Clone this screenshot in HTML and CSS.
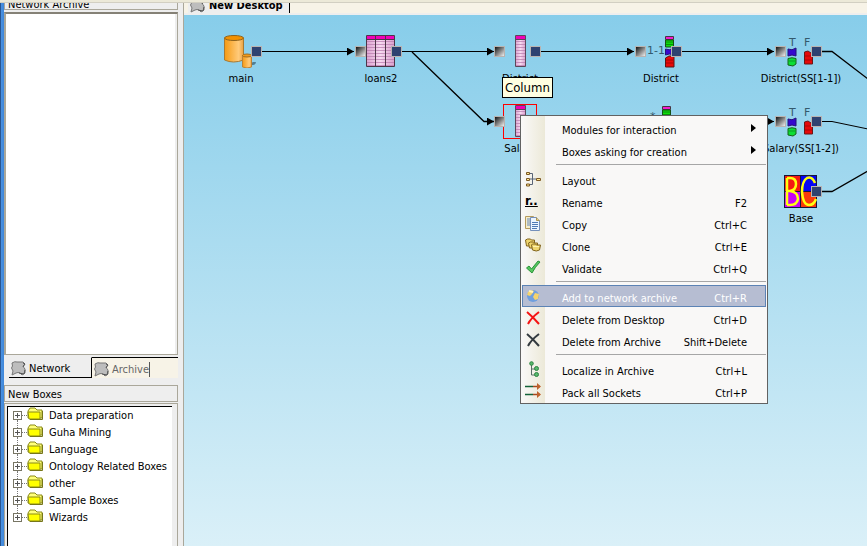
FILE: index.html
```
<!DOCTYPE html>
<html lang="en">
<head>
<meta charset="utf-8">
<title>New Desktop</title>
<link rel="stylesheet" href="styles.css">
</head>
<body>
<svg class="defs" aria-hidden="true">
  <defs>
    <linearGradient id="gold"><stop offset="0" stop-color="#f59a12"/><stop offset=".75" stop-color="#ffcb7c"/><stop offset="1" stop-color="#e9a040"/></linearGradient>
    <linearGradient id="pink"><stop offset="0" stop-color="#dca4d0"/><stop offset=".5" stop-color="#f6d9f0"/><stop offset="1" stop-color="#d9a0cc"/></linearGradient>
    <pattern id="lines" width="4" height="3" patternUnits="userSpaceOnUse"><path d="M0 1.5h4" stroke="#b878ac" stroke-width=".7"/></pattern>
    <marker id="arrow" markerWidth="8" markerHeight="8" refX="7" refY="4" orient="auto" markerUnits="userSpaceOnUse"><path d="M0 0L7 4L0 8z"/></marker>
    <symbol id="puzzle" viewBox="0 0 15 15"><path d="M1 2Q4 0 6 1L12 1L14 3L12 5Q13 7 14 8L14 12L11 14L9 12Q7 11 5 12L1 14L2 10L0.500 7L1.500 5Z" fill="#bdbdbd" stroke="#777"/><path d="M12 2L14 3L12 6M14 9L13 13L8 12" fill="none" stroke="#555"/></symbol>
    <symbol id="folder" viewBox="0 0 17 14"><path d="M1 4L3 1H8L10 3H15V11H1Z" fill="#ffff7a" stroke="#8a8a18"/><path d="M1 5H13V12H2Z" fill="#ff0" stroke="#8a8a18"/><path d="M15.500 4V12.500H3" fill="none" stroke="#77771a"/></symbol>
    <symbol id="column" viewBox="0 0 34 34"><rect x="12.500" y="1.500" width="10" height="31" fill="url(#pink)"/><rect x="12.500" y="5" width="10" height="27" fill="url(#lines)"/><path d="M13 2h9v3h-9z" fill="#f000b8"/><path d="M12.500 1.500h10v31h-10zM12 5.500h11" fill="none" stroke="#5d4659"/></symbol>
    <symbol id="table" viewBox="0 0 34 34"><rect x="2.500" y="1.500" width="28" height="31" fill="url(#pink)"/><rect x="2.500" y="5" width="28" height="27" fill="url(#lines)"/><path d="M3 2h27v3H3z" fill="#f000b8"/><path d="M2.500 1.500h28v31h-28zM2 5.500h29M11.500 2v30M21.500 2v30" fill="none" stroke="#4c3648"/></symbol>
    <symbol id="database" viewBox="0 0 34 34"><path d="M24 31q8 1 8-3l-3 0z" fill="#527e94"/><path d="M.500 4V26Q9 30 19.500 26V4Z" fill="url(#gold)" stroke="#a97931"/><ellipse cx="10" cy="4" rx="9.500" ry="2.500" fill="#f39100" stroke="#8d621d"/><path d="M18.500 21.500V33Q23 35 27.500 33V21.500Z" fill="url(#gold)" stroke="#bc8235"/><ellipse cx="23" cy="21.500" rx="4.500" ry="1.500" fill="#f39a19" stroke="#9e6d24"/></symbol>
    <symbol id="bar" viewBox="0 0 10 32"><path d="M.500.500h8v3h-8z" fill="#f41ad0" stroke="#453640"/><path d="M.500 4h8v7h-8z" fill="#0bdf0b" stroke="#155015"/><path d="M1 6h7M1 8.500h7" stroke="#0a8d0a"/><path d="M.500 13Q4 15 9 12V19Q4 17 .500 19z" fill="#3908cf" stroke="#26107a"/><path d="M.500 22L4 20L9 20V31H.500z" fill="#e80909" stroke="#5d1515"/><path d="M1 24h7M1 27h7" stroke="#a60606"/></symbol>
    <symbol id="truth" viewBox="0 0 34 34"><path d="M4 15Q8 17 12 14V22Q8 20 4 22z" fill="#3508cf" stroke="#24107a"/><path d="M4 24.500Q8 23 12 24.500V30L9 32L4 31z" fill="#0bdf35" stroke="#176117"/><path d="M5 27h6" stroke="#0b9c25"/><path d="M20.500 18L24 17L28.500 20V30H20.500z" fill="#e50909" stroke="#6a1717"/><path d="M21 22h7M21 26h7" stroke="#aa0808"/></symbol>
  </defs>
</svg>
<div class="app">
  <div class="toolbar-edge"></div>
  <aside class="sidebar">
    <h2 class="panel-title panel-title-cut"><span>Network Archive</span></h2>
    <div class="panel archive"></div>
    <div class="tabs" role="tablist">
      <button class="tab active" role="tab"><svg class="puzzle"><use href="#puzzle"/></svg>Network</button>
      <button class="tab" role="tab"><svg class="puzzle"><use href="#puzzle"/></svg><span class="tab-end">Archive</span></button>
    </div>
    <h2 class="panel-title">New Boxes</h2>
    <div class="panel boxes">
      <ul class="tree">
        <li><span class="plus"></span><svg class="folder"><use href="#folder"/></svg>Data preparation</li>
        <li><span class="plus"></span><svg class="folder"><use href="#folder"/></svg>Guha Mining</li>
        <li><span class="plus"></span><svg class="folder"><use href="#folder"/></svg>Language</li>
        <li><span class="plus"></span><svg class="folder"><use href="#folder"/></svg>Ontology Related Boxes</li>
        <li><span class="plus"></span><svg class="folder"><use href="#folder"/></svg>other</li>
        <li><span class="plus"></span><svg class="folder"><use href="#folder"/></svg>Sample Boxes</li>
        <li><span class="plus"></span><svg class="folder"><use href="#folder"/></svg>Wizards</li>
      </ul>
    </div>
  </aside>
  <main class="desktop">
    <div class="desk-tabs"><button class="desk-tab"><svg class="puzzle"><use href="#puzzle"/></svg><span>New Desktop</span></button></div>
    <div class="canvas">
      <svg class="edges" aria-hidden="true">
        <g fill="none" stroke="#000">
          <path d="M78 36.500H170" marker-end="url(#arrow)"/>
          <path d="M218 36.500H310" marker-end="url(#arrow)"/>
          <path d="M228 37L300 106.500H310" marker-end="url(#arrow)" stroke-width="1.300"/>
          <path d="M357 36.500H450" marker-end="url(#arrow)"/>
          <path d="M498 36.500H590" marker-end="url(#arrow)"/>
          <path d="M498 106.500H590" marker-end="url(#arrow)"/>
          <path d="M638 36.500H648L684 64" stroke-width="1.300"/>
          <path d="M638 106.500H648L684 114"/>
          <path d="M638 176.500H648L684 156" stroke-width="1.300"/>
        </g>
      </svg>
      <div class="node c1 r1"><svg class="pic"><use href="#database"/></svg><i class="out"></i><span>main</span></div>
      <div class="node c2 r1"><svg class="pic"><use href="#table"/></svg><i class="in"></i><i class="out"></i><span>loans2</span></div>
      <div class="node c3 r1"><svg class="pic"><use href="#column"/></svg><i class="in"></i><i class="out"></i><span>District</span></div>
      <div class="node c4 r1"><svg class="pic"><text class="mark" x="3" y="20">1-1</text><use href="#bar" x="21" y="2" width="10" height="32"/></svg><i class="in"></i><i class="out"></i><span>District</span></div>
      <div class="node c5 r1"><svg class="pic"><use href="#truth"/><text class="mark" x="5" y="12">T</text><text class="mark" x="20" y="12">F</text></svg><i class="in"></i><i class="out"></i><span>District(SS[1-1])</span></div>
      <div class="node c3 r2 selected"><svg class="pic"><use href="#column"/></svg><i class="in"></i><span>Salary</span></div>
      <div class="node c4 r2"><svg class="pic"><text class="mark" x="6" y="16">*</text><use href="#bar" x="18" y="2" width="10" height="32"/></svg></div>
      <div class="node c5 r2"><svg class="pic"><use href="#truth"/><text class="mark" x="5" y="12">T</text><text class="mark" x="20" y="12">F</text></svg><i class="in"></i><i class="out"></i><span>Salary(SS[1-2])</span></div>
      <div class="node c5 r3"><svg class="pic" viewBox="1 0 34 34"><path d="M1 1h33v33H1z" fill="#16163a"/><path d="M2 2h15v15H2z" fill="#f51a12"/><path d="M18 2h15v15H18z" fill="#0404f4"/><path d="M2 18h15v15H2z" fill="#c800f5"/><path d="M18 18h15v15H18z" fill="#f93a0b"/><path d="M4 4V31M4 4H7Q13 4 13 10Q13 16 7 17H4M7 17Q15 18 15 25Q14 31 7 31H4M32 9Q29 2 24 4Q19 7 19 18Q20 31 26 31Q31 31 33 25" fill="none" stroke="#ff1" stroke-width="2.500"/></svg><i class="out"></i><span>Base</span></div>
      <div class="tooltip" role="tooltip">Column</div>
      <div class="menu" role="menu">
        <button role="menuitem"><span class="ico"></span><span>Modules for interaction</span><b class="more"></b></button>
        <button role="menuitem"><span class="ico"></span><span>Boxes asking for creation</span><b class="more"></b></button>
        <div class="sep" role="separator"></div>
        <button role="menuitem"><span class="ico"><svg viewBox="0 0 16 16"><path d="M5 2.500H7.500V13.500H5M5 8h6" fill="none" stroke="#586477"/><path d="M1.500 1.500h3v2h-3zM1.500 7.500h3v2h-3zM1.500 13h3v2h-3zM11.500 7.500h4v2h-4z" fill="#ffe991" stroke="#7c5824"/></svg></span><span>Layout</span></button>
        <button role="menuitem"><span class="ico rename">r..</span><span>Rename</span><kbd>F2</kbd></button>
        <button role="menuitem"><span class="ico"><svg viewBox="0 0 16 16"><path d="M.500 1.500h8l2 2v10h-10z" fill="#f5edcb" stroke="#b59b5d"/><path d="M2 4h3M2 6h3M2 8h3M2 10h3" stroke="#6689bd"/><path d="M5.500 2.500h6l3 3v10h-9z" fill="#edf5ff" stroke="#7590bb"/><path d="M11.500 2.500v3h3" fill="#f4d279" stroke="#aa955a"/><path d="M7 7.500h6M7 9.500h6M7 11.500h6M7 13.500h5" stroke="#507ab5"/></svg></span><span>Copy</span><kbd>Ctrl+C</kbd></button>
        <button role="menuitem"><span class="ico"><svg viewBox="0 0 16 16"><g fill="#efd66e" stroke="#81631d"><path d="M.500 3l2-1h3l1 1h3v6h-8z"/><path d="M3.500 6l2-1h3l1 1h3v5h-8z"/><path d="M6.500 8l1-1h3l1 1h4l-1 5q-3 2-7 0z"/></g><path d="M8 9.500h6" stroke="#fff3af"/></svg></span><span>Clone</span><kbd>Ctrl+E</kbd></button>
        <button role="menuitem"><span class="ico"><svg viewBox="0 0 16 16"><path d="M1.500 9L4 7L6.500 10L13 2L15 3Q10 8 7 14z" fill="#56c95f" stroke="#2b923a"/></svg></span><span>Validate</span><kbd>Ctrl+Q</kbd></button>
        <div class="sep" role="separator"></div>
        <button class="current" role="menuitem"><span class="ico"><svg viewBox="0 0 16 16"><circle cx="8" cy="8" r="6" fill="#6f9fde"/><path d="M3 4Q6 1 9 3L7 6L5 8L2 7zM10 5L14 6L13 11L10 12L8 9z" fill="#f4d36c"/><path d="M4 3l4 1" stroke="#fff3bd" stroke-width="2"/></svg></span><span>Add to network archive</span><kbd>Ctrl+R</kbd></button>
        <button role="menuitem"><span class="ico"><svg viewBox="0 0 16 16"><path d="M2 2Q8 7 14 14M14 2Q6 8 3 14" fill="none" stroke="#f51414" stroke-width="2"/></svg></span><span>Delete from Desktop</span><kbd>Ctrl+D</kbd></button>
        <button role="menuitem"><span class="ico"><svg viewBox="0 0 16 16"><path d="M2 2Q8 7 14 14M14 2Q6 8 3 14" fill="none" stroke="#343b40" stroke-width="2"/></svg></span><span>Delete from Archive</span><kbd>Shift+Delete</kbd></button>
        <div class="sep" role="separator"></div>
        <button role="menuitem"><span class="ico"><svg viewBox="0 0 16 16"><path d="M6.500 3V14H11M6.500 8H11" fill="none" stroke="#586d67"/><g fill="#58b96b" stroke="#2d8443"><circle cx="6.500" cy="2.500" r="1.800"/><circle cx="11.500" cy="7.500" r="2"/><circle cx="11.500" cy="13.500" r="2"/></g></svg></span><span>Localize in Archive</span><kbd>Ctrl+L</kbd></button>
        <button role="menuitem"><span class="ico"><svg viewBox="0 0 16 16"><path d="M0 3.500H8M0 11.500H8" stroke="#14633b" stroke-width="1.500"/><path d="M8 3.500H15M8 11.500H15" stroke="#a6471f" stroke-width="1.500"/><path d="M12 0L16 3.500L12 7zM12 8L16 11.500L12 15z" fill="#bf622d"/></svg></span><span>Pack all Sockets</span><kbd>Ctrl+P</kbd></button>
      </div>
    </div>
  </main>
</div>
</body>
</html>
```
FILE: styles.css
```
* { box-sizing: border-box; }
body { margin: 0; font: 11px/17px "DejaVu Sans Condensed", "Noto Sans", sans-serif; color: #000; background: #eee; }
button { font: inherit; border: 0; margin: 0; padding: 0; background: none; }
.defs { position: absolute; width: 0; height: 0; }
.app { display: grid; grid-template: 3px minmax(0, 1fr) / 184px minmax(0, 1fr); height: 100vh; overflow: hidden; }
.toolbar-edge { grid-column: 1 / -1; background: #ece9d8; border-bottom: 1px solid #d2cfc2; }
.sidebar { display: flex; flex-direction: column; min-height: 0; padding: 0 5px 0 4px; border-right: 1px solid #aaa79a; background: linear-gradient(90deg, #2a5590 1px, #4a92e2 1px, #3f86d8 4px, #eee 4px); }
.panel-title { flex: none; height: 17px; margin: 7px 0 1px; padding-left: 3px; border: 1px solid #aaa79a; font-weight: 400; font-size: 11px; line-height: 18px; }
.panel-title-cut { height: 7px; margin: 0 0 2px; border-top: 0; display: flex; align-items: flex-end; overflow: hidden; }
.panel-title-cut span { line-height: 9px; }
.panel { background: #fff; border: 2px solid #aaa79a; border-right: 1px solid #aaa79a; }
.archive { flex: 1; border-top-color: #858176; border-bottom-width: 1px; box-shadow: inset -2px 0 #eee; }
.tabs { flex: none; display: flex; height: 21px; margin: 2px 0 0 5px; font-size: 11px; }
.tab { flex: 1; display: flex; align-items: center; gap: 3px; padding: 2px 0 0 2px; border-top: 1px solid #000; color: #666; background: #f7f3e7; text-align: left; }
.tab.active { flex: 0 0 83px; color: #000; background: #eee; border-top-color: #eee; border-right: 1px solid #000; border-bottom: 1px solid #000; }
.tab-end { border-right: 1px solid #555; line-height: 15px; }
.puzzle { flex: none; width: 15px; height: 15px; }
.boxes { flex: none; height: 144px; margin-bottom: -1px; border-width: 1px; padding: 2px 5px 0 2px; background: #eee; }
.tree { height: 100%; list-style: none; margin: 0; padding: 0 0 0 5px; border-top: 1px solid #000; border-left: 1px solid #000; background: #fff; }
.tree li { display: flex; align-items: center; height: 17px; line-height: 19px; white-space: nowrap; }
.plus { position: relative; flex: none; width: 9px; height: 9px; border: 1px solid #777564; background: linear-gradient(#555, #555) center / 5px 1px no-repeat, linear-gradient(#555, #555) center / 1px 5px no-repeat; }
.plus::after { content: ""; display: block; width: 5px; margin: 3px 0 0 8px; border-top: 1px dotted #777; }
.plus::before { content: ""; position: absolute; top: 8px; left: 3px; height: 8px; border-left: 1px dotted #777; }
.tree li:last-child .plus::before { display: none; }
.folder { flex: none; width: 17px; height: 14px; margin: 0 5px 3px 5px; }
.desktop { display: flex; flex-direction: column; min-width: 0; }
.desk-tabs { flex: none; display: flex; height: 12px; background: #f7f3e7; border-bottom: 2px solid #eee; }
.desk-tab { display: flex; align-items: flex-end; height: 10px; margin-left: 4px; padding: 0 6px 0 2px; gap: 4px; border-right: 1px solid #000; background: #eee; font: bold 11px/15px "DejaVu Sans Condensed", "DejaVu Sans", sans-serif; overflow: hidden; }
.canvas { position: relative; flex: 1; overflow: hidden; background: linear-gradient(#87cdea, #daf0f8); }
.edges { position: absolute; width: 100%; height: 100%; }
.node { position: absolute; width: 34px; height: 35px; }
.c1 { left: 40px; } .c2 { left: 180px; } .c3 { left: 319px; } .c4 { left: 460px; } .c5 { left: 600px; }
.r1 { top: 19px; } .r2 { top: 89px; } .r3 { top: 159px; }
.pic { display: block; width: 34px; height: 34px; }
.selected { outline: 1px solid #f00; outline-offset: -1px; }
.node i { position: absolute; top: 12px; width: 11px; height: 11px; border: 1px solid #b9b3b0; background: #2e4270; }
.node .in { left: -9px; background: linear-gradient(135deg, #111, #eee); }
.node .out { left: 27px; }
.node span { position: absolute; top: 38px; left: 50%; transform: translateX(-50%); font: 10px/14px "DejaVu Sans", sans-serif; white-space: nowrap; }
.mark { font: 11px "DejaVu Sans", sans-serif; fill: #34596c; }
.tooltip { position: absolute; left: 318px; top: 62px; padding: 0 2px; border: 1px solid #000; background: #ffffe1; font-size: 13px; line-height: 19px; }
.menu { position: absolute; left: 336px; top: 100px; width: 248px; padding: 1px; border: 1px solid #626262; background: linear-gradient(90deg, #f9f8f7, #ece9d8) 1px 0 / 23px 100% no-repeat #f9f8f7; }
.menu button { display: flex; align-items: center; width: 100%; height: 22px; padding: 4px 19px 0 0; text-align: left; }
.menu .current { color: #fff; background: #b6bdd2; border: 1px solid #5c83b5; padding: 4px 18px 0 0; }
.current .ico { margin-left: -1px; }
.ico { flex: none; width: 37px; height: 16px; margin: 0 3px 4px 0; padding-left: 3px; }
.ico svg { display: block; width: 16px; height: 16px; }
.rename { font: bold 13px/16px "DejaVu Sans Condensed", sans-serif; text-decoration: underline; }
kbd { margin-left: auto; font: inherit; }
.more { margin: 0 -9px 5px auto; border: 4px solid transparent; border-left: 5px solid #000; border-right: 0; }
.sep { height: 7px; margin-left: 34px; padding-top: 3px; }
.sep::before { content: ""; display: block; border-top: 1px solid #a6a6a6; }
```
